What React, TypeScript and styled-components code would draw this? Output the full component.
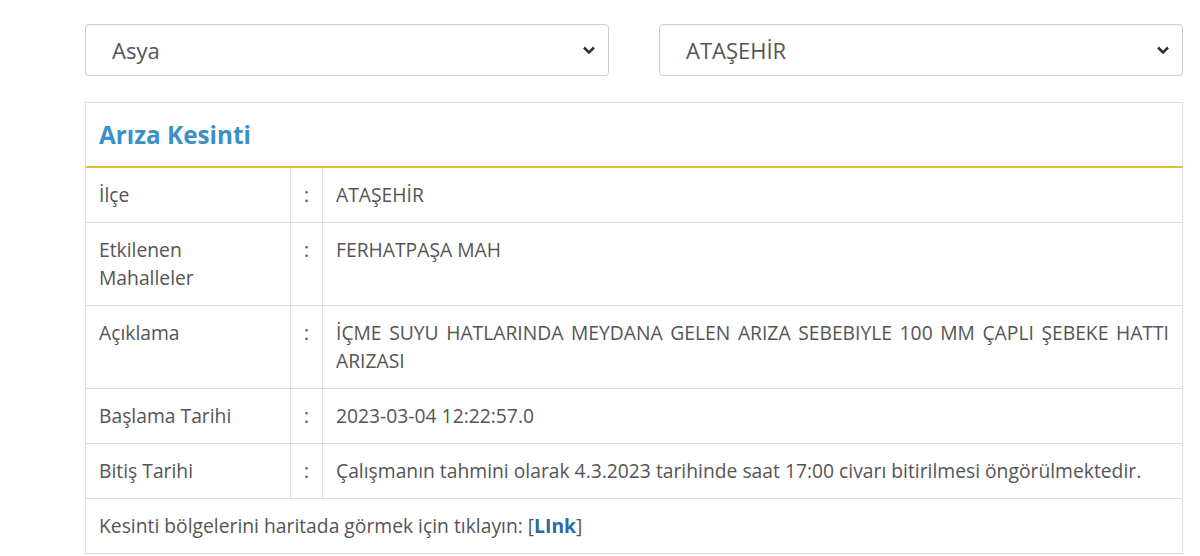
import React from 'react';
import styled, { createGlobalStyle } from 'styled-components';

const GlobalStyle = createGlobalStyle`
  html, body {
    margin: 0;
    padding: 0;
    background: #ffffff;
  }
  body {
    font-family: 'Open Sans', 'Liberation Sans', sans-serif;
    color: #555555;
  }
`;

const Page = styled.div`
  padding: 24px 17px 0 85px;
  display: flex;
  flex-direction: column;
  gap: 26px;
`;

const SelectRow = styled.div`
  display: grid;
  grid-template-columns: 1fr 1fr;
  column-gap: 50px;
`;

const SelectBox = styled.div`
  height: 50px;
  border: 1px solid #cfcfcf;
  border-radius: 4px;
  display: flex;
  align-items: center;
  justify-content: space-between;
  padding: 0 12px 0 26px;
  font-size: 22px;
  color: #555555;
  box-shadow: inset 0 1px 1px rgba(0, 0, 0, 0.03);
`;

const Panel = styled.div`
  border: 1px solid #dddddd;
`;

const PanelHeader = styled.div`
  height: 63px;
  display: flex;
  align-items: center;
  padding: 0 13px;
  border-bottom: 2px solid #e2c02c;
`;

const Title = styled.h3`
  margin: 0;
  font-size: 24.3px;
  font-weight: 700;
  color: #3d8fc8;
`;

const Table = styled.div`
  display: grid;
  grid-template-columns: 204px 32px 1fr;
`;

const Cell = styled.div<{ $center?: boolean; $justify?: boolean; $first?: boolean }>`
  padding: 13px ${(p) => (p.$center ? '0' : '13px')};
  font-size: 19.3px;
  line-height: 28px;
  border-top: ${(p) => (p.$first ? 'none' : '1px solid #dddddd')};
  border-left: 1px solid #dddddd;
  text-align: ${(p) => (p.$center ? 'center' : p.$justify ? 'justify' : 'left')};
  &:nth-child(3n + 1) {
    border-left: none;
  }
`;

const Footer = styled.div`
  border-top: 1px solid #dddddd;
  padding: 13px 13px;
  font-size: 19.3px;
  line-height: 28px;
`;

const Link = styled.a`
  color: #2c6aa0;
  font-weight: 700;
  text-decoration: none;
`;

const Chevron = () => (
  <svg width="14" height="10" viewBox="0 0 14 10">
    <path d="M2 2.5 L7 7.5 L12 2.5" fill="none" stroke="#333" strokeWidth="2.6" />
  </svg>
);

const rows: { label: string; value: string; justify?: boolean }[] = [
  { label: 'İlçe', value: 'ATAŞEHİR' },
  { label: 'Etkilenen Mahalleler', value: 'FERHATPAŞA MAH' },
  {
    label: 'Açıklama',
    value:
      'İÇME SUYU HATLARINDA MEYDANA GELEN ARIZA SEBEBIYLE 100 MM ÇAPLI ŞEBEKE HATTI ARIZASI',
    justify: true,
  },
  { label: 'Başlama Tarihi', value: '2023-03-04 12:22:57.0' },
  {
    label: 'Bitiş Tarihi',
    value: 'Çalışmanın tahmini olarak 4.3.2023 tarihinde saat 17:00 civarı bitirilmesi öngörülmektedir.',
  },
];

export default function App() {
  return (
    <>
      <GlobalStyle />
      <Page>
        <SelectRow>
          <SelectBox>
            <span>Asya</span>
            <Chevron />
          </SelectBox>
          <SelectBox>
            <span>ATAŞEHİR</span>
            <Chevron />
          </SelectBox>
        </SelectRow>
        <Panel>
          <PanelHeader>
            <Title>Arıza Kesinti</Title>
          </PanelHeader>
          <Table>
            {rows.map((r, i) => (
              <React.Fragment key={r.label}>
                <Cell $first={i === 0}>{r.label}</Cell>
                <Cell $first={i === 0} $center>
                  :
                </Cell>
                <Cell $first={i === 0} $justify={r.justify}>
                  {r.value}
                </Cell>
              </React.Fragment>
            ))}
          </Table>
          <Footer>
            Kesinti bölgelerini haritada görmek için tıklayın: [<Link href="#">LInk</Link>]
          </Footer>
        </Panel>
      </Page>
    </>
  );
}
